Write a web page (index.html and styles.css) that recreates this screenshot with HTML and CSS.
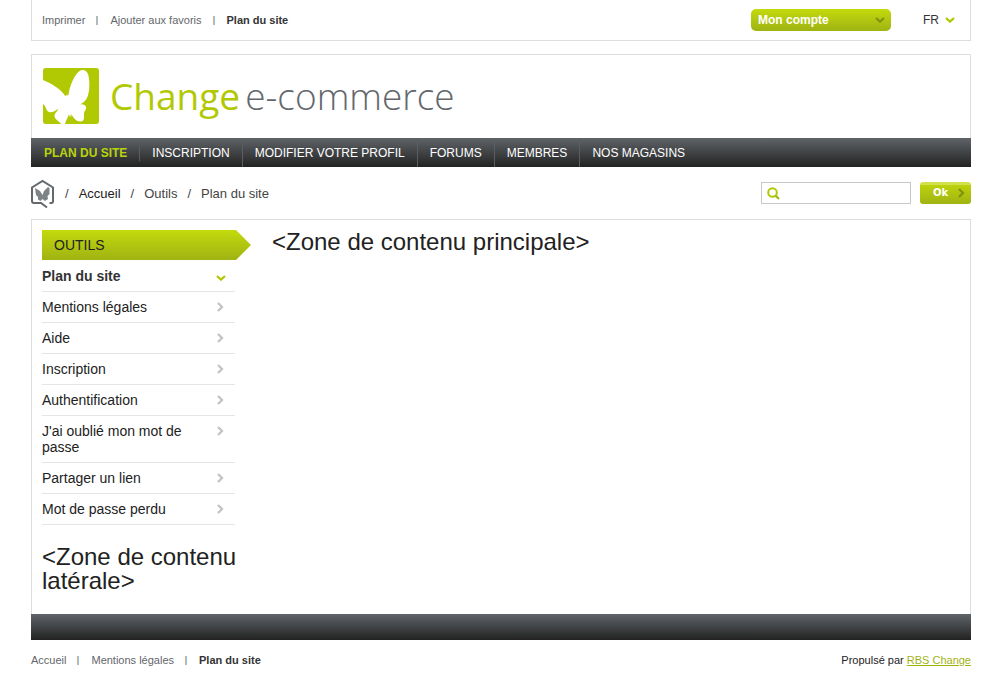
FILE: index.html
```html
<!DOCTYPE html>
<html lang="fr">
<head>
<meta charset="utf-8">
<title>Plan du site</title>
<link rel="stylesheet" href="styles.css">
</head>
<body>
<svg class="defs" aria-hidden="true">
  <symbol id="down" viewBox="0 0 10 6"><path d="M1 1l4 3.600 4-3.600" fill="none" stroke="currentColor" stroke-width="2.300"/></symbol>
  <symbol id="right" viewBox="0 0 7 10"><path d="M1 1l4 4-4 4" fill="none" stroke="currentColor" stroke-width="2.300"/></symbol>
</svg>
<div class="page">
  <div class="topbar">
    <ul class="links">
      <li><a href="#">Imprimer</a></li>
      <li><a href="#">Ajouter aux favoris</a></li>
      <li><a class="current" href="#">Plan du site</a></li>
    </ul>
    <div class="tools">
      <button class="account" type="button">Mon compte <svg class="ico-down"><use href="#down"/></svg></button>
      <button class="lang" type="button">FR <svg class="ico-down"><use href="#down"/></svg></button>
    </div>
  </div>

  <header class="header">
    <a class="logo" href="#">
      <svg class="logo-mark" viewBox="0 0 56 56" aria-hidden="true">
        <rect width="56" height="56" rx="3" fill="#b1c903"/>
        <path fill="#fff" d="M0 12C7 15 16 20 20 25L22.500 28.500L23 26.500L24 28L25 26.500L25.500 27.500C26 20 31 7 36 3.500C39 1 43 1.500 45 6C47 12 47 24 44 30C42.500 33 40 35 37 36.500C40 36 42.500 37 43 39C43.500 42 41 43 41 46C41 50 41.500 53 38 53.500C34 54 30 50 28.500 46L28 49.500L27 46L26.500 49L25.500 46.500C25 50 23 52 22 56H18C17.500 54 12 52 11.500 48C11.500 45 14 44 15.500 41C13 42 8 46 5 43.500C3 42 3 38 0 36Z"/>
      </svg>
      <span class="brand">Change</span>
      <span class="product">e-commerce</span>
    </a>
  </header>

  <nav class="menu">
    <a class="active" href="#">PLAN DU SITE</a>
    <a href="#">INSCRIPTION</a>
    <a href="#">MODIFIER VOTRE PROFIL</a>
    <a href="#">FORUMS</a>
    <a href="#">MEMBRES</a>
    <a href="#">NOS MAGASINS</a>
  </nav>

  <div class="trail">
    <div class="crumbs">
      <a class="home" href="#" aria-label="Accueil du site">
        <svg viewBox="0 0 24 30">
          <path d="M18.500 24H20.500Q22 24 22 22V8.500L11.500 2L1 8.500V22Q1 24 3 24H10L16 28.500" fill="none" stroke="#63686d" stroke-width="2"/>
          <path fill="#7d8387" d="M4 9L9 12L11.500 16L13 12L17 8L18.500 9L18.500 15L16.500 17L17 20L14 22L11.500 20L9.500 22L7 20.500L7 18L5 16Z"/>
        </svg>
      </a>
      <span>/</span><a class="root" href="#">Accueil</a><span>/</span><a href="#">Outils</a><span>/</span><a href="#">Plan du site</a>
    </div>
    <form class="search">
      <label class="field">
        <svg viewBox="0 0 13 13" aria-hidden="true"><circle cx="5.500" cy="5.500" r="4.300" fill="none" stroke="#b1c903" stroke-width="2"/><path d="M8.500 8.500l3.500 3.500" stroke="#a4b813" stroke-width="2.200"/></svg>
        <input type="text" aria-label="Rechercher">
      </label>
      <button class="ok" type="button">Ok <svg class="ico-right"><use href="#right"/></svg></button>
    </form>
  </div>

  <div class="content">
    <aside class="side">
      <h2 class="side-title">OUTILS</h2>
      <ul class="side-menu">
        <li><a class="current" href="#">Plan du site <svg class="ico-down"><use href="#down"/></svg></a></li>
        <li><a href="#"><span>Mentions légales</span> <svg class="ico-right"><use href="#right"/></svg></a></li>
        <li><a href="#"><span>Aide</span> <svg class="ico-right"><use href="#right"/></svg></a></li>
        <li><a href="#"><span>Inscription</span> <svg class="ico-right"><use href="#right"/></svg></a></li>
        <li><a href="#"><span>Authentification</span> <svg class="ico-right"><use href="#right"/></svg></a></li>
        <li><a href="#"><span>J'ai oublié mon mot de passe</span> <svg class="ico-right"><use href="#right"/></svg></a></li>
        <li><a href="#"><span>Partager un lien</span> <svg class="ico-right"><use href="#right"/></svg></a></li>
        <li><a href="#"><span>Mot de passe perdu</span> <svg class="ico-right"><use href="#right"/></svg></a></li>
      </ul>
      <p class="zone">&lt;Zone de contenu latérale&gt;</p>
    </aside>
    <main class="main">
      <p class="zone">&lt;Zone de contenu principale&gt;</p>
    </main>
  </div>
  <div class="band"></div>

  <footer class="footer">
    <ul class="links">
      <li><a href="#">Accueil</a></li>
      <li><a href="#">Mentions légales</a></li>
      <li><a class="current" href="#">Plan du site</a></li>
    </ul>
    <p class="powered">Propulsé par <a href="#">RBS Change</a></p>
  </footer>
</div>
</body>
</html>
```
FILE: styles.css
```css
* { box-sizing: border-box; }
body {
  margin: 0;
  padding: 0 29px 0 31px;
  background: #fff;
  color: #222;
  font-family: "Liberation Sans", Arial, sans-serif;
  font-size: 14px;
  line-height: 16px;
}
a { color: inherit; text-decoration: none; }
ul, p, h2 { margin: 0; padding: 0; list-style: none; }
button { border: 0; background: none; font: inherit; cursor: pointer; }
svg { display: block; flex: none; }
.defs { position: absolute; width: 0; height: 0; }
.ico-down { width: 10px; height: 6px; }
.ico-right { width: 7px; height: 10px; }
.page { max-width: 940px; margin: 0 auto; }

.topbar {
  display: flex;
  justify-content: space-between;
  align-items: center;
  height: 41px;
  padding: 0 15px 0 10px;
  border: 1px solid #ddd;
  border-top: 0;
}
.links { display: flex; color: #63666b; font-size: 11px; }
.links li + li::before {
  content: "";
  display: inline-block;
  width: 2px;
  height: 9px;
  margin: 0 12px 0 11px;
  background: linear-gradient(90deg, #dcae84 50%, #8cc4f5 50%);
  vertical-align: -1px;
}
.links .current { color: #333; font-weight: bold; }
.tools { display: flex; align-items: center; gap: 32px; font-size: 12px; }
.account {
  display: flex;
  align-items: center;
  justify-content: space-between;
  width: 140px;
  height: 22px;
  padding: 0 6px 0 7px;
  border-radius: 5px;
  background: linear-gradient(#c3da0c, #9fb313);
  color: #fff;
  font-weight: bold;
}
.account svg { color: #82930f; }
.lang { display: flex; align-items: center; gap: 6px; padding: 0; color: #333; }
.lang svg, .current svg { color: #b1c903; }

.header {
  margin-top: 13px;
  padding: 13px 11px 14px;
  border: 1px solid #ddd;
  border-bottom: 0;
}
.logo {
  display: flex;
  align-items: center;
  font-family: "Open Sans", "Noto Sans", sans-serif;
  font-size: 37px;
  line-height: 56px;
}
.logo-mark { width: 56px; height: 56px; }
.brand { margin: 0 5px 0 11px; color: #b1c903; }
.product { color: #63686d; font-weight: 300; }

.menu {
  display: flex;
  height: 29px;
  padding-left: 1px;
  background: linear-gradient(#5f6468, #222);
  color: #fff;
  font-size: 12px;
  line-height: 30px;
}
.menu a { padding: 0 12px; border-right: 1px solid #5a5e62; }
.menu a:last-child { border: 0; }
.menu .active {
  border-image: linear-gradient(transparent 8px, #5a5e62 8px 22px, transparent 22px) 1;
  color: #b9d40b;
  font-weight: bold;
}

.trail {
  display: flex;
  align-items: center;
  justify-content: space-between;
  height: 52px;
}
.crumbs { display: flex; align-items: center; gap: 10px; padding-top: 1px; color: #444; font-size: 13px; }
.home svg { width: 24px; height: 30px; }
.root { color: #222; }
.search { display: flex; gap: 9px; }
.field {
  display: flex;
  align-items: center;
  width: 150px;
  height: 22px;
  padding-left: 5px;
  border: 1px solid #c8c8c8;
}
.field svg { width: 13px; height: 13px; }
.field input {
  flex: 1;
  min-width: 0;
  border: 0;
  outline: 0;
  background: none;
  font: inherit;
}
.ok {
  display: flex;
  align-items: center;
  justify-content: space-between;
  width: 51px;
  height: 22px;
  padding: 0 6px 0 13px;
  border-radius: 3px;
  background: linear-gradient(#d0e14c 3px, #bcd20c 3px, #9fb313);
  color: #fff;
  font-family: "DejaVu Sans", sans-serif;
  font-size: 10px;
  font-weight: bold;
}
.ok svg { color: #82930f; }

.content {
  display: flex;
  gap: 30px;
  padding: 10px 10px 21px;
  border: 1px solid #ddd;
  border-bottom: 0;
}
.side { width: 200px; }
.side-title {
  width: 209px;
  padding-left: 12px;
  background: linear-gradient(#c3da0c, #9fb313);
  clip-path: polygon(0 0, 194px 0, 100% 50%, 194px 100%, 0 100%);
  font-size: 14px;
  font-weight: normal;
  line-height: 30px;
}
.side-menu { width: 193px; margin-top: 1px; }
.side-menu li { border-bottom: 1px solid #e5e5e5; }
.side-menu a {
  display: flex;
  justify-content: space-between;
  padding: 7px 11px 7px 0;
}
.side-menu span { max-width: 160px; }
.side-menu svg { margin-top: 3px; color: #c3c3c3; }
.side-menu .current { padding-right: 9px; color: #333; font-weight: bold; }
.side-menu .current svg { margin-top: 7px; color: #b1c903; }
.zone { font-size: 24px; line-height: 24px; }
.side .zone { margin-top: 20px; }
.main { flex: 1; }
.band { height: 26px; background: linear-gradient(#5f6468, #222); }

.footer { display: flex; justify-content: space-between; padding-top: 12px; }
.powered { font-size: 11px; }
.powered a { color: #9fb313; text-decoration: underline; }
```
